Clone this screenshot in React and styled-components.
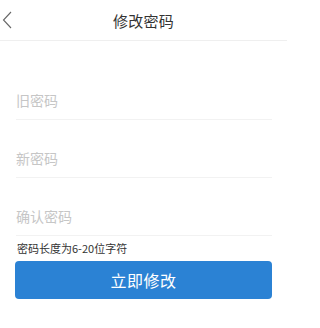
import React from 'react';
import styled, { createGlobalStyle } from 'styled-components';

const GlobalStyle = createGlobalStyle`
  * { box-sizing: border-box; }
  body {
    margin: 0;
    background: #fff;
    font-family: "Noto Sans CJK SC", "Noto Sans", sans-serif;
  }
`

const Page = styled.div`
  width: 287px;
  height: 328px;
  background: #fff;
  display: flex;
  flex-direction: column;
`

const Header = styled.div`
  height: 41px;
  display: flex;
  align-items: center;
  justify-content: center;
  position: relative;
  border-bottom: 1px solid #efefef;
`

const Back = styled.button`
  position: absolute;
  left: 0;
  top: 0;
  height: 40px;
  width: 30px;
  padding: 0 0 0 2px;
  border: none;
  background: none;
  display: flex;
  align-items: center;
`

const Title = styled.div`
  font-size: 15px;
  color: #333;
  letter-spacing: 0.3px;
`

const Form = styled.div`
  margin-top: 21px;
  padding: 0 15px 0 16px;
  display: flex;
  flex-direction: column;
`

const Row = styled.div`
  height: 58px;
  padding-top: 18px;
  display: flex;
  align-items: center;
  border-bottom: 1px solid #f2f2f2;
`

const Input = styled.input`
  width: 100%;
  border: none;
  outline: none;
  padding: 0;
  font-family: inherit;
  font-size: 14px;
  color: #333;
  background: transparent;
  &::placeholder {
    color: #c6c6c6;
  }
`

const Hint = styled.div`
  margin-top: 5px;
  padding-left: 1px;
  font-size: 11px;
  line-height: 14px;
  color: #333;
`

const Submit = styled.button`
  margin-top: 6px;
  margin-left: -1px;
  height: 38px;
  border: none;
  border-radius: 4px;
  background: #2b82d4;
  color: #fff;
  font-family: inherit;
  font-size: 16px;
  letter-spacing: 0.5px;
`

const fields = ['旧密码', '新密码', '确认密码']

const App = () => {
  return (
    <Page>
      <GlobalStyle />
      <Header>
        <Back>
          <svg width="10" height="18" viewBox="0 0 10 18">
            <polyline points="9,1 1.5,9 9,17" fill="none" stroke="#666" strokeWidth="1.1" />
          </svg>
        </Back>
        <Title>修改密码</Title>
      </Header>
      <Form>
        {fields.map((label) => (
          <Row key={label}>
            <Input type="password" placeholder={label} />
          </Row>
        ))}
        <Hint>密码长度为6-20位字符</Hint>
        <Submit>立即修改</Submit>
      </Form>
    </Page>
  )
}

export default App
